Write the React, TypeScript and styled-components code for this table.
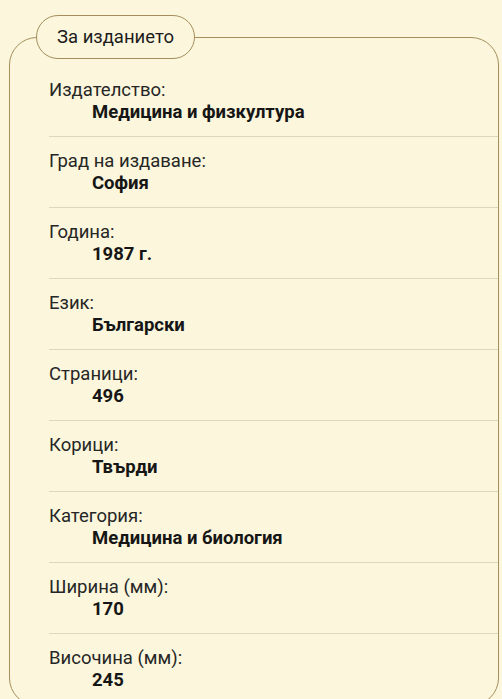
import React from "react";
import styled, { createGlobalStyle } from "styled-components";

const Global = createGlobalStyle`
  html, body {
    margin: 0;
    padding: 0;
    background: #fcf7dc;
  }
  body {
    font-family: Roboto, "Noto Sans", "Liberation Sans", sans-serif;
    color: #222;
  }
`;

const Page = styled.div`
  padding: 0 3px 0 9px;
`;

const Panel = styled.fieldset`
  margin: 15px 0 0 0;
  padding: 7px 0 0 39px;
  border: 1.5px solid #a58d5c;
  border-radius: 28px;
  min-width: 0;
`;

const Legend = styled.legend`
  margin-left: -13px;
  padding: 0 20px;
  height: 44px;
  box-sizing: border-box;
  border: 1.5px solid #a58d5c;
  border-radius: 22px;
  background: #fcf7dc;
  display: flex;
  align-items: center;
  font-size: 18.5px;
  line-height: 22px;
  color: #1c1c1c;
`;

const List = styled.dl`
  margin: 0;
  padding: 0;
`;

const Row = styled.div`
  padding: 13px 0 13px 0;
  border-bottom: 1px solid #dcd8c0;
`;

const Label = styled.dt`
  margin: 0;
  font-size: 18.5px;
  line-height: 22px;
  font-weight: 400;
  color: #262626;
`;

const Value = styled.dd`
  margin: 0 0 0 43px;
  font-size: 18.5px;
  line-height: 22px;
  font-weight: 700;
  color: #161616;
`;

const items: [string, string][] = [
  ["Издателство:", "Медицина и физкултура"],
  ["Град на издаване:", "София"],
  ["Година:", "1987 г."],
  ["Език:", "Български"],
  ["Страници:", "496"],
  ["Корици:", "Твърди"],
  ["Категория:", "Медицина и биология"],
  ["Ширина (мм):", "170"],
  ["Височина (мм):", "245"],
];

export default function App() {
  return (
    <Page>
      <Global />
      <Panel>
        <Legend>За изданието</Legend>
        <List>
          {items.map(([k, v]) => (
            <Row key={k}>
              <Label>{k}</Label>
              <Value>{v}</Value>
            </Row>
          ))}
        </List>
      </Panel>
    </Page>
  );
}
